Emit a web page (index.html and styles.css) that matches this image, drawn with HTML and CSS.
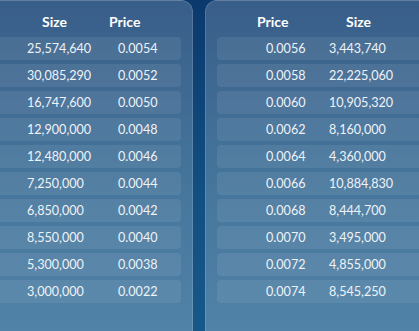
FILE: index.html
```html
<!DOCTYPE html>
<html>
<head>
<meta charset="utf-8">
<link rel="stylesheet" href="styles.css">
</head>
<body>
<div class="book">
  <section class="panel panel-bids">
    <div class="head head-bids"><span></span><span>Size</span><span>Price</span></div>
    <div class="rows">
      <div class="row row-bids"><span></span><span>25,574,640</span><span>0.0054</span></div>
      <div class="row row-bids"><span></span><span>30,085,290</span><span>0.0052</span></div>
      <div class="row row-bids"><span></span><span>16,747,600</span><span>0.0050</span></div>
      <div class="row row-bids"><span></span><span>12,900,000</span><span>0.0048</span></div>
      <div class="row row-bids"><span></span><span>12,480,000</span><span>0.0046</span></div>
      <div class="row row-bids"><span></span><span>7,250,000</span><span>0.0044</span></div>
      <div class="row row-bids"><span></span><span>6,850,000</span><span>0.0042</span></div>
      <div class="row row-bids"><span></span><span>8,550,000</span><span>0.0040</span></div>
      <div class="row row-bids"><span></span><span>5,300,000</span><span>0.0038</span></div>
      <div class="row row-bids"><span></span><span>3,000,000</span><span>0.0022</span></div>
    </div>
  </section>
  <section class="panel panel-asks">
    <div class="head head-asks"><span></span><span>Price</span><span>Size</span></div>
    <div class="rows">
      <div class="row row-asks"><span></span><span>0.0056</span><span>3,443,740</span></div>
      <div class="row row-asks"><span></span><span>0.0058</span><span>22,225,060</span></div>
      <div class="row row-asks"><span></span><span>0.0060</span><span>10,905,320</span></div>
      <div class="row row-asks"><span></span><span>0.0062</span><span>8,160,000</span></div>
      <div class="row row-asks"><span></span><span>0.0064</span><span>4,360,000</span></div>
      <div class="row row-asks"><span></span><span>0.0066</span><span>10,884,830</span></div>
      <div class="row row-asks"><span></span><span>0.0068</span><span>8,444,700</span></div>
      <div class="row row-asks"><span></span><span>0.0070</span><span>3,495,000</span></div>
      <div class="row row-asks"><span></span><span>0.0072</span><span>4,855,000</span></div>
      <div class="row row-asks"><span></span><span>0.0074</span><span>8,545,250</span></div>
    </div>
  </section>
</div>
</body>
</html>
```

FILE: styles.css
```css
html, body {
  margin: 0;
  padding: 0;
  height: 100%;
  overflow: hidden;
}
body {
  background: linear-gradient(180deg, #0b396e 0%, #115081 60%, #17588a 100%);
  font-family: Lato, "Noto Sans", sans-serif;
  color: #eef3f8;
}
.book {
  display: flex;
  gap: 12px;
  margin-left: -21px;
  height: 100%;
}
.panel {
  flex: none;
  box-sizing: border-box;
  height: 100%;
  background: linear-gradient(180deg, rgba(255,255,255,0.19) 0%, rgba(255,255,255,0.25) 100%);
  border: 1px solid rgba(255,255,255,0.14);
  border-bottom: none;
  border-radius: 12px 12px 0 0;
  padding: 0 11px;
}
.panel-bids {
  width: 214px;
}
.panel-asks {
  width: 260px;
}
.head {
  display: grid;
  padding-top: 13px;
  padding-bottom: 7px;
  line-height: 16px;
  font-size: 14px;
  font-weight: 700;
  color: #ffffff;
}
.head-bids {
  grid-template-columns: 51px 67px 1fr;
}
.head-asks {
  grid-template-columns: 40px 89px 1fr;
}
.rows {
  display: flex;
  flex-direction: column;
  gap: 4px;
}
.row {
  display: grid;
  height: 23px;
  line-height: 23px;
  font-size: 12.6px;
  border-radius: 4px;
  background: rgba(255,255,255,0.08);
}
.row-bids {
  grid-template-columns: 36px 91px 1fr;
}
.row-asks {
  grid-template-columns: 49px 63px 1fr;
}
```
